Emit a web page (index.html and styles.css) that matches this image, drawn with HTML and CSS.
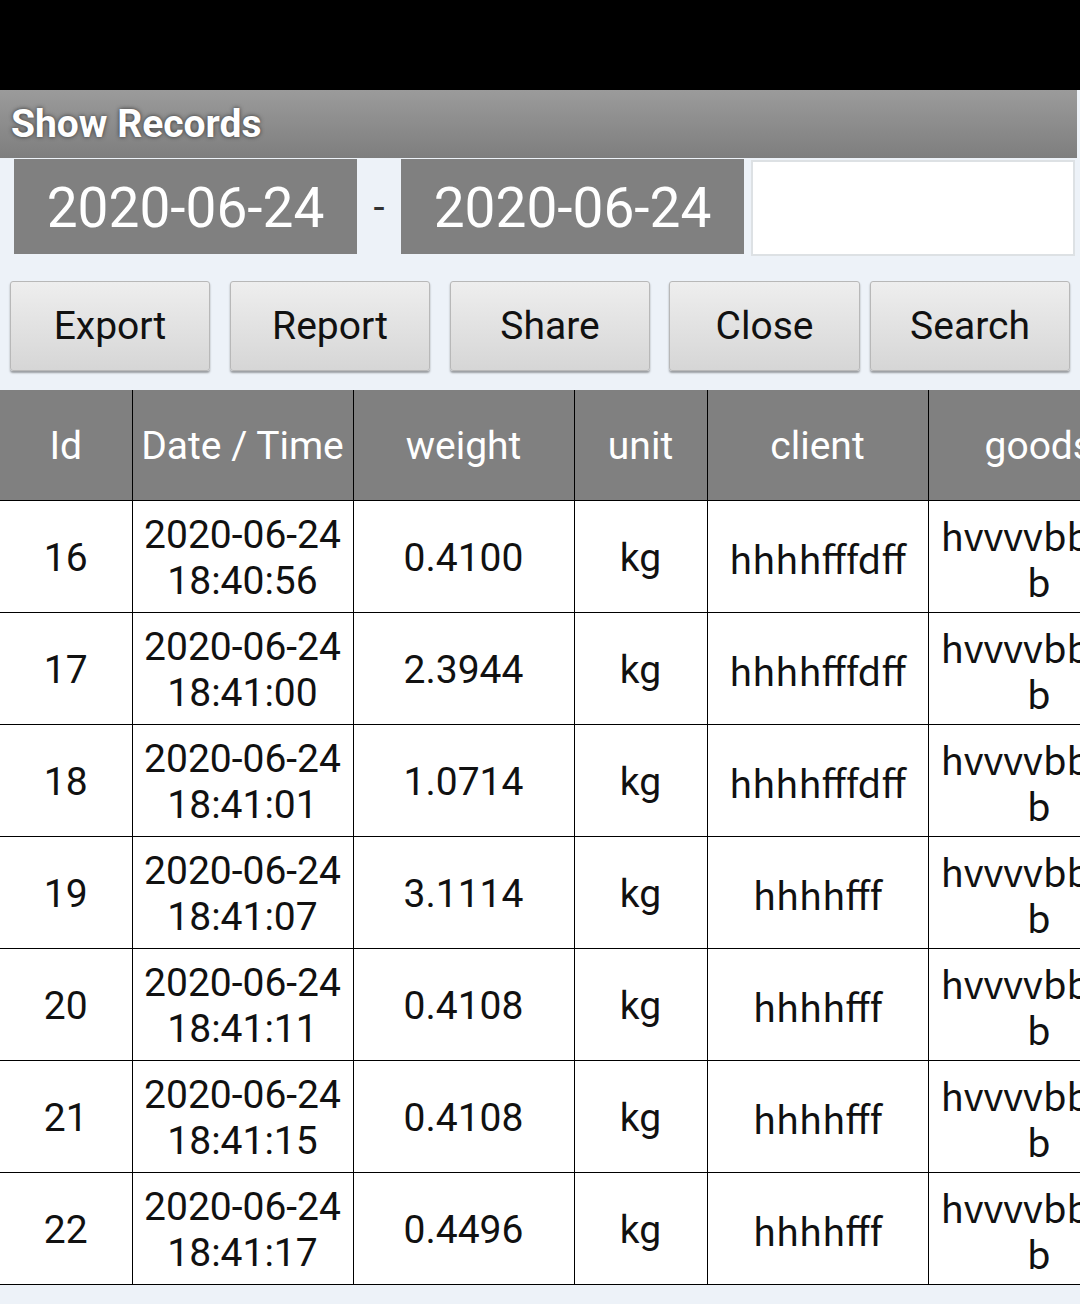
FILE: index.html
```html
<html>
  <head>
    <title>Show Records</title>
    <meta charset="utf-8" />
    <link rel="stylesheet" href="styles.css">
  </head>
  <body>
    <div class="status_bar"></div>

    <div class="title_bar">Show Records</div>

    <div class="date_row">
      <div class="date_box">2020-06-24</div>
      <div class="dash">-</div>
      <div class="date_box">2020-06-24</div>
      <div class="search_input"></div>
    </div>

    <div class="btn_row">
      <button class="btn btn_export">Export</button>
      <button class="btn btn_report">Report</button>
      <button class="btn btn_share">Share</button>
      <button class="btn btn_close">Close</button>
      <button class="btn btn_search">Search</button>
    </div>

    <table class="records">
      <colgroup>
        <col class="c_id">
        <col class="c_date">
        <col class="c_weight">
        <col class="c_unit">
        <col class="c_client">
        <col class="c_goods">
      </colgroup>
      <tr class="head">
        <th>Id</th>
        <th>Date / Time</th>
        <th>weight</th>
        <th>unit</th>
        <th>client</th>
        <th>goods</th>
      </tr>
      <tr>
        <td>16</td>
        <td class="date">2020-06-24<br>18:40:56</td>
        <td>0.4100</td>
        <td>kg</td>
        <td class="txt">hhhhfffdff</td>
        <td class="txt goods">hvvvvbbbb<br>b</td>
      </tr>
      <tr>
        <td>17</td>
        <td class="date">2020-06-24<br>18:41:00</td>
        <td>2.3944</td>
        <td>kg</td>
        <td class="txt">hhhhfffdff</td>
        <td class="txt goods">hvvvvbbbb<br>b</td>
      </tr>
      <tr>
        <td>18</td>
        <td class="date">2020-06-24<br>18:41:01</td>
        <td>1.0714</td>
        <td>kg</td>
        <td class="txt">hhhhfffdff</td>
        <td class="txt goods">hvvvvbbbb<br>b</td>
      </tr>
      <tr>
        <td>19</td>
        <td class="date">2020-06-24<br>18:41:07</td>
        <td>3.1114</td>
        <td>kg</td>
        <td class="txt">hhhhfff</td>
        <td class="txt goods">hvvvvbbbb<br>b</td>
      </tr>
      <tr>
        <td>20</td>
        <td class="date">2020-06-24<br>18:41:11</td>
        <td>0.4108</td>
        <td>kg</td>
        <td class="txt">hhhhfff</td>
        <td class="txt goods">hvvvvbbbb<br>b</td>
      </tr>
      <tr>
        <td>21</td>
        <td class="date">2020-06-24<br>18:41:15</td>
        <td>0.4108</td>
        <td>kg</td>
        <td class="txt">hhhhfff</td>
        <td class="txt goods">hvvvvbbbb<br>b</td>
      </tr>
      <tr>
        <td>22</td>
        <td class="date">2020-06-24<br>18:41:17</td>
        <td>0.4496</td>
        <td>kg</td>
        <td class="txt">hhhhfff</td>
        <td class="txt goods">hvvvvbbbb<br>b</td>
      </tr>
    </table>
  </body>
</html>
```

FILE: styles.css
```css
  html, body {
    width: 1080px;
    height: 1304px;
    margin: 0px;
    overflow: hidden;
  }

  body {
    background-color: #edf2f8;
    font-family: Roboto, "Liberation Sans", sans-serif;
  }

  .status_bar {
    height: 90px;
    background-color: #000;
  }

  .title_bar {
    height: 68px;
    padding-left: 11px;
    margin-right: 3px;
    line-height: 68px;
    font-size: 39px;
    font-weight: bold;
    color: #fff;
    text-shadow: 0 0 4px #333;
    background: linear-gradient(#9b9b9b, #7e7e7e);
  }

  /* 日期行 */
  .date_row {
    display: flex;
    height: 96px;
    padding: 1px 5px 0 14px;
  }

  .date_box {
    width: 343px;
    height: 95px;
    line-height: 98px;
    text-align: center;
    font-size: 55px;
    color: #fff;
    background-color: #808080;
  }

  .dash {
    width: 44px;
    line-height: 98px;
    text-align: center;
    font-size: 40px;
    color: #333;
  }

  .search_input {
    flex: 1;
    margin-left: 7px;
    margin-top: 1px;
    height: 92px;
    background-color: #fff;
    border: 2px solid #dde1e4;
  }

  /* 按钮行 */
  .btn_row {
    display: flex;
    margin-top: 26px;
    padding-left: 10px;
  }

  .btn {
    box-sizing: border-box;
    width: 200px;
    height: 90px;
    margin: 0 0 0 20px;
    padding: 0;
    font-family: Roboto, "Liberation Sans", sans-serif;
    font-size: 39px;
    color: #111;
    border: 1px solid #b8b8b8;
    border-radius: 3px;
    background: linear-gradient(#eeeeee, #d6d6d6);
    box-shadow: 0 2px 2px rgba(0, 0, 0, 0.35);
  }

  .btn_export {
    margin-left: 0;
  }

  .btn_close {
    width: 191px;
    margin-left: 19px;
  }

  .btn_search {
    margin-left: 10px;
  }

  /* 记录表格 */
  .records {
    margin-top: 19px;
    width: 1149px;
    table-layout: fixed;
    border-collapse: collapse;
  }

  .c_id { width: 132px; }
  .c_date { width: 221px; }
  .c_weight { width: 221px; }
  .c_unit { width: 133px; }
  .c_client { width: 221px; }
  .c_goods { width: 221px; }

  .records th,
  .records td {
    padding: 0;
    text-align: center;
    border-left: 1px solid #000;
    border-bottom: 1px solid #000;
    overflow: hidden;
    white-space: nowrap;
  }

  .records th:first-child,
  .records td:first-child {
    border-left: none;
  }

  .records th {
    height: 110px;
    padding-top: 3px;
    font-size: 39px;
    font-weight: normal;
    color: #fff;
    background-color: #808080;
  }

  .records td {
    height: 112px;
    padding-top: 3px;
    font-size: 39px;
    line-height: 46px;
    color: #111;
    background-color: #fff;
  }

  .records td.txt {
    font-family: "Noto Sans CJK SC", "Noto Sans", sans-serif;
    font-size: 38px;
  }

  .records td.goods {
    text-align: center;
  }
```
